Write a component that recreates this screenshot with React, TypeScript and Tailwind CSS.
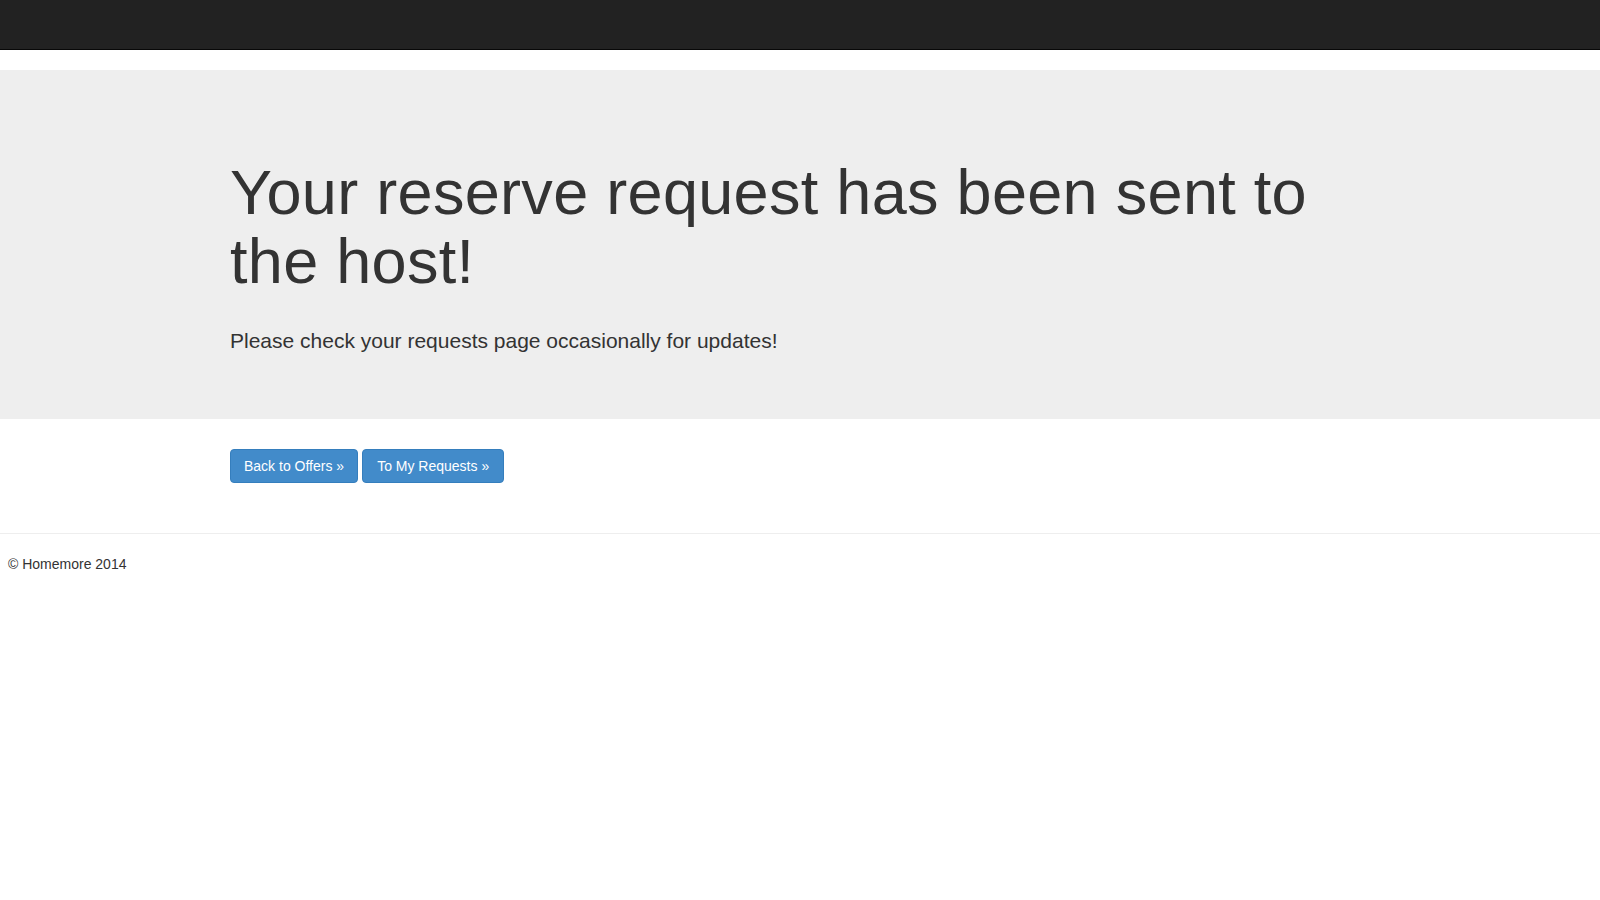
export default function App() {
  const font = { fontFamily: '"Liberation Sans", Arial, sans-serif' };
  return (
    <div className="min-h-screen bg-white text-[#333]" style={font}>
      <div className="h-[50px] bg-[#222] border-b border-[#080808]" />
      <div className="pt-[20px]">
        <div className="bg-[#eee] pt-[88px] pb-[63px]">
          <div className="w-[1170px] mx-auto px-[15px]">
            <h1 className="m-0 text-[63px] leading-[1.1] font-normal tracking-[0.3px] text-[#333]">
              Your reserve request has been sent to the host!
            </h1>
            <p className="mt-[29px] text-[21px] leading-[30px]">
              Please check your requests page occasionally for updates!
            </p>
          </div>
        </div>
      </div>
      <div className="w-[1170px] mx-auto px-[15px] mt-[30px] flex gap-[4px]">
        <a className="inline-block px-[13px] py-[6px] text-[14px] leading-[20px] text-white bg-[#428bca] border border-[#357ebd] rounded-[4px] cursor-pointer">
          Back to Offers &raquo;
        </a>
        <a className="inline-block px-[14px] py-[6px] text-[14px] leading-[20px] text-white bg-[#428bca] border border-[#357ebd] rounded-[4px] cursor-pointer">
          To My Requests &raquo;
        </a>
      </div>
      <div className="mt-[50px] border-t border-[#eee]">
        <p className="pt-[20px] pl-[8px] text-[14px] leading-[20px]">&copy; Homemore 2014</p>
      </div>
    </div>
  );
}
